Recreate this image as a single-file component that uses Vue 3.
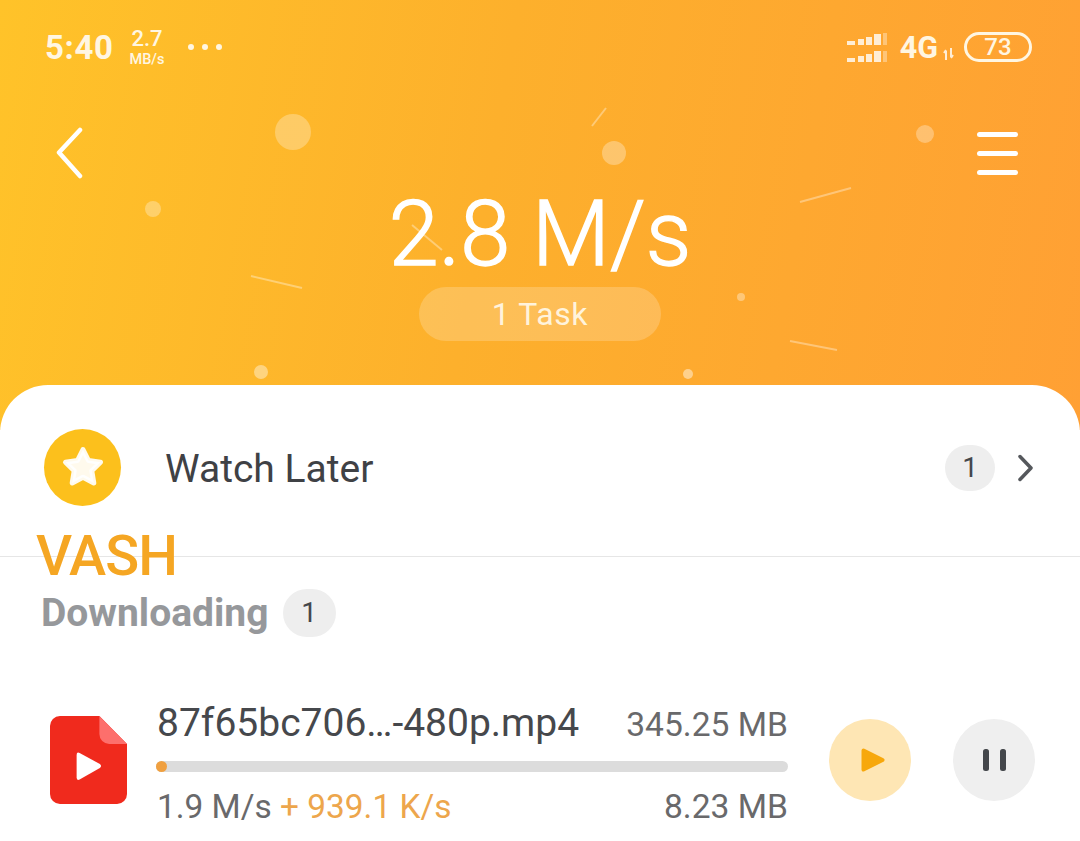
<script setup>
const dots = [
  { cx: 293, cy: 132, r: 18, o: 0.28 },
  { cx: 614, cy: 153, r: 12, o: 0.3 },
  { cx: 925, cy: 134, r: 9, o: 0.3 },
  { cx: 153, cy: 209, r: 8, o: 0.3 },
  { cx: 741, cy: 297, r: 4, o: 0.35 },
  { cx: 261, cy: 372, r: 7, o: 0.4 },
  { cx: 688, cy: 374, r: 5, o: 0.45 }
]
const streaks = [
  { x1: 592, y1: 126, x2: 606, y2: 108 },
  { x1: 800, y1: 202, x2: 851, y2: 188 },
  { x1: 251, y1: 276, x2: 302, y2: 288 },
  { x1: 790, y1: 341, x2: 837, y2: 350 },
  { x1: 412, y1: 225, x2: 442, y2: 250 }
]
const signal = [
  { x: 845, w: 8, h: 4 },
  { x: 856, w: 6, h: 6 },
  { x: 864, w: 6, h: 8 },
  { x: 872, w: 7, h: 11 }
]
</script>

<template>
  <main class="screen">
    <section class="hero">
      <svg class="particles" width="1080" height="430" viewBox="0 0 1080 430">
        <circle v-for="d in dots" :key="d.cx" :cx="d.cx" :cy="d.cy" :r="d.r" fill="#fff" :fill-opacity="d.o" />
        <line v-for="s in streaks" :key="s.x1" :x1="s.x1" :y1="s.y1" :x2="s.x2" :y2="s.y2" stroke="#fff" stroke-opacity=".35" stroke-width="2" />
      </svg>

      <div class="status-bar">
        <div class="status-left">
          <span class="clock">5:40</span>
          <span class="net-speed"><b>2.7</b><small>MB/s</small></span>
          <span class="status-dots"><i></i><i></i><i></i></span>
        </div>
        <div class="status-right">
          <svg width="43" height="32" viewBox="843 32 43 32" fill="#fff" fill-opacity=".8">
            <template v-for="b in signal" :key="b.x">
              <rect :x="b.x" :y="46 - b.h" :width="b.w" :height="b.h" />
              <rect :x="b.x" :y="63 - b.h" :width="b.w" :height="b.h" />
            </template>
            <rect x="881" y="34" width="4" height="12" fill-opacity=".35" />
            <rect x="881" y="52" width="4" height="11" fill-opacity=".35" />
          </svg>
          <span class="network">4G</span>
          <svg class="arrows" width="12" height="14" viewBox="0 0 12 14" fill="none" stroke="#fff" stroke-opacity=".8" stroke-width="2">
            <path d="M3 4 3 13M8 1 8 10M1 6 3 3M10 8 8 11" />
          </svg>
          <span class="battery">73</span>
        </div>
      </div>

      <div class="toolbar">
        <svg width="28" height="52" viewBox="0 0 28 52" fill="none" stroke="#fff" stroke-width="4.5" stroke-linecap="round" stroke-linejoin="round">
          <path d="M24 3 3 25.500 24 49" />
        </svg>
        <div class="menu-icon"><i></i><i></i><i></i></div>
      </div>

      <h1 class="speed">2.8 M/s</h1>
      <div class="task-pill">1 Task</div>
    </section>

    <section class="sheet">
      <div class="watch-later">
        <div class="star-badge">
          <svg width="46" height="44" viewBox="0 0 46 44">
            <path d="M23 4.500 28.500 15.500 40.500 17.200 31.800 25.800 33.800 38 23 32.200 12.200 38 14.200 25.800 5.500 17.200 17.500 15.500Z" fill="#fff" fill-opacity=".92" stroke="#fff" stroke-opacity=".92" stroke-width="5" stroke-linejoin="round" />
          </svg>
        </div>
        <span class="watch-title">Watch Later</span>
        <span class="count-badge">1</span>
        <svg width="16" height="28" viewBox="0 0 16 28" fill="none" stroke="#55585c" stroke-width="3.500" stroke-linecap="round" stroke-linejoin="round">
          <path d="M2 2.500 13 14 2 25.500" />
        </svg>
      </div>

      <div class="watermark">VASH</div>

      <div class="section-head">
        <h2>Downloading</h2>
        <span class="section-count">1</span>
      </div>

      <article class="task">
        <svg class="file-icon" width="77" height="88" viewBox="0 0 78 88" preserveAspectRatio="none">
          <path d="M10 0H50L78 28V78A10 10 0 0 1 68 88H10A10 10 0 0 1 0 78V10A10 10 0 0 1 10 0Z" fill="#f02a1d" />
          <path d="M50 0 78 28H60A10 10 0 0 1 50 18Z" fill="#fd6f6c" />
          <path d="M27 39Q27 35.500 30 37L50.500 48Q53 50 50.500 52L30 63.500Q27 65 27 61.500Z" fill="#fff" />
        </svg>

        <div class="task-body">
          <div class="task-row">
            <span class="file-name">87f65bc706…-480p.mp4</span>
            <span class="file-size">345.25 MB</span>
          </div>
          <div class="progress"><div class="progress-fill"></div></div>
          <div class="task-row">
            <span class="rates">1.9 M/s <em>+ 939.1 K/s</em></span>
            <span class="file-size">8.23 MB</span>
          </div>
        </div>

        <div class="task-actions">
          <button class="round-btn play">
            <svg width="24" height="24" viewBox="0 0 24 24" fill="#f7a80c" stroke="#f7a80c" stroke-width="4" stroke-linejoin="round">
              <path d="M2.500 2.500 21.500 12 2.500 21.500Z" />
            </svg>
          </button>
          <button class="round-btn pause">
            <svg width="24" height="24" viewBox="0 0 24 24" fill="#44474b">
              <rect x="1" y="1" width="6" height="22" rx="2.500" />
              <rect x="18" y="1" width="6" height="22" rx="2.500" />
            </svg>
          </button>
        </div>
      </article>
    </section>
  </main>
</template>

<style>
html, body { margin: 0; background: #fff; }
</style>

<style scoped>
.screen { width: 1080px; height: 841px; overflow: hidden; background: #fff; font-family: Roboto, "Liberation Sans", sans-serif; }
.hero { position: relative; height: 430px; box-sizing: border-box; padding-top: 27px; background: linear-gradient(100deg, #ffc329 0%, #fdb02c 45%, #ffa034 100%); color: #fff; text-align: center; }
.particles { position: absolute; inset: 0; pointer-events: none; }
.status-bar { position: relative; display: flex; justify-content: space-between; align-items: center; height: 40px; padding: 0 48px 0 45px; color: #fff6e2; }
.status-left, .status-right { display: flex; align-items: center; }
.clock { font-size: 33px; font-weight: 700; letter-spacing: .6px; }
.net-speed { display: flex; flex-direction: column; align-items: center; margin-left: 16px; line-height: 1; }
.net-speed b { font-size: 22px; font-weight: 500; line-height: 26px; }
.net-speed small { font-size: 14.500px; font-weight: 500; line-height: 16px; }
.status-dots { display: flex; gap: 8px; margin-left: 24px; }
.status-dots i { width: 6px; height: 6px; border-radius: 50%; background: #fff6e2; }
.network { margin-left: 12px; font-size: 30.500px; font-weight: 700; }
.arrows { margin: 14px 0 0 5px; }
.battery { box-sizing: border-box; width: 68px; height: 30px; margin-left: 9px; border: 3px solid #fff6e2; border-radius: 15px; font-size: 24px; font-weight: 500; line-height: 24px; }
.toolbar { position: relative; display: flex; justify-content: space-between; align-items: center; height: 60px; margin-top: 56px; padding: 0 62px 0 56px; }
.menu-icon { display: flex; flex-direction: column; gap: 14px; }
.menu-icon i { display: block; width: 41px; height: 5px; border-radius: 3px; background: #fff; }
.speed { position: relative; margin: 2px 0 0; font-size: 90px; font-weight: 300; line-height: 100px; -webkit-text-stroke: 1.400px #fff; }
.task-pill { position: relative; width: 242px; height: 54px; margin: 2px auto 0; border-radius: 27px; background: rgba(255, 255, 255, .2); font-size: 32px; line-height: 54px; color: #fff3dc; letter-spacing: .6px; }
.sheet { position: relative; height: 456px; margin-top: -45px; border-radius: 48px 48px 0 0; background: #fff; }
.watch-later { display: flex; align-items: center; box-sizing: border-box; height: 172px; padding: 0 46px 5px 44px; border-bottom: 1px solid #e6e6e6; }
.star-badge { display: grid; place-items: center; width: 77px; height: 77px; margin-top: -2px; border-radius: 50%; background: #fcc01c; }
.watch-title { flex: 1; margin: 2px 0 0 44px; font-size: 39px; color: #3f4145; }
.count-badge { width: 50px; height: 46px; margin-right: 23px; border-radius: 23px; background: #eee; font-size: 28px; line-height: 46px; text-align: center; color: #44474b; }
.watermark { position: absolute; left: 36px; top: 141px; font-size: 56px; font-weight: 500; line-height: 60px; letter-spacing: -1px; color: #f5a623; }
.section-head { display: flex; align-items: center; height: 54px; margin-top: 29px; padding-left: 41px; }
.section-head h2 { margin: 0; font-size: 39px; font-weight: 700; color: #96989b; }
.section-count { width: 53px; height: 48px; margin-left: 14px; border-radius: 24px; background: #eee; font-size: 28px; line-height: 48px; text-align: center; color: #44474b; }
.task { display: flex; align-items: center; margin-top: 53px; padding: 0 45px 0 50px; }
.file-icon { flex: none; }
.task-body { flex: 1; margin: 0 41px 0 30px; padding-top: 7px; }
.task-row { display: flex; justify-content: space-between; align-items: baseline; }
.file-name { font-size: 39px; color: #46484c; }
.file-size { font-size: 33.600px; color: #69696b; }
.rates { font-size: 33.400px; color: #69696b; }
.rates em { font-style: normal; color: #eda64c; }
.progress { height: 11px; margin: 15px 0 15px -1px; border-radius: 6px; background: #dcdcdc; }
.progress-fill { width: 11px; height: 11px; border-radius: 50%; background: #f0a040; }
.task-actions { display: flex; gap: 42px; }
.round-btn { display: grid; place-items: center; width: 82px; height: 82px; padding: 0 0 0 6px; border: 0; border-radius: 50%; }
.pause { padding: 0; }
.play { background: #fee6b4; }
.pause { background: #efefef; }
</style>
